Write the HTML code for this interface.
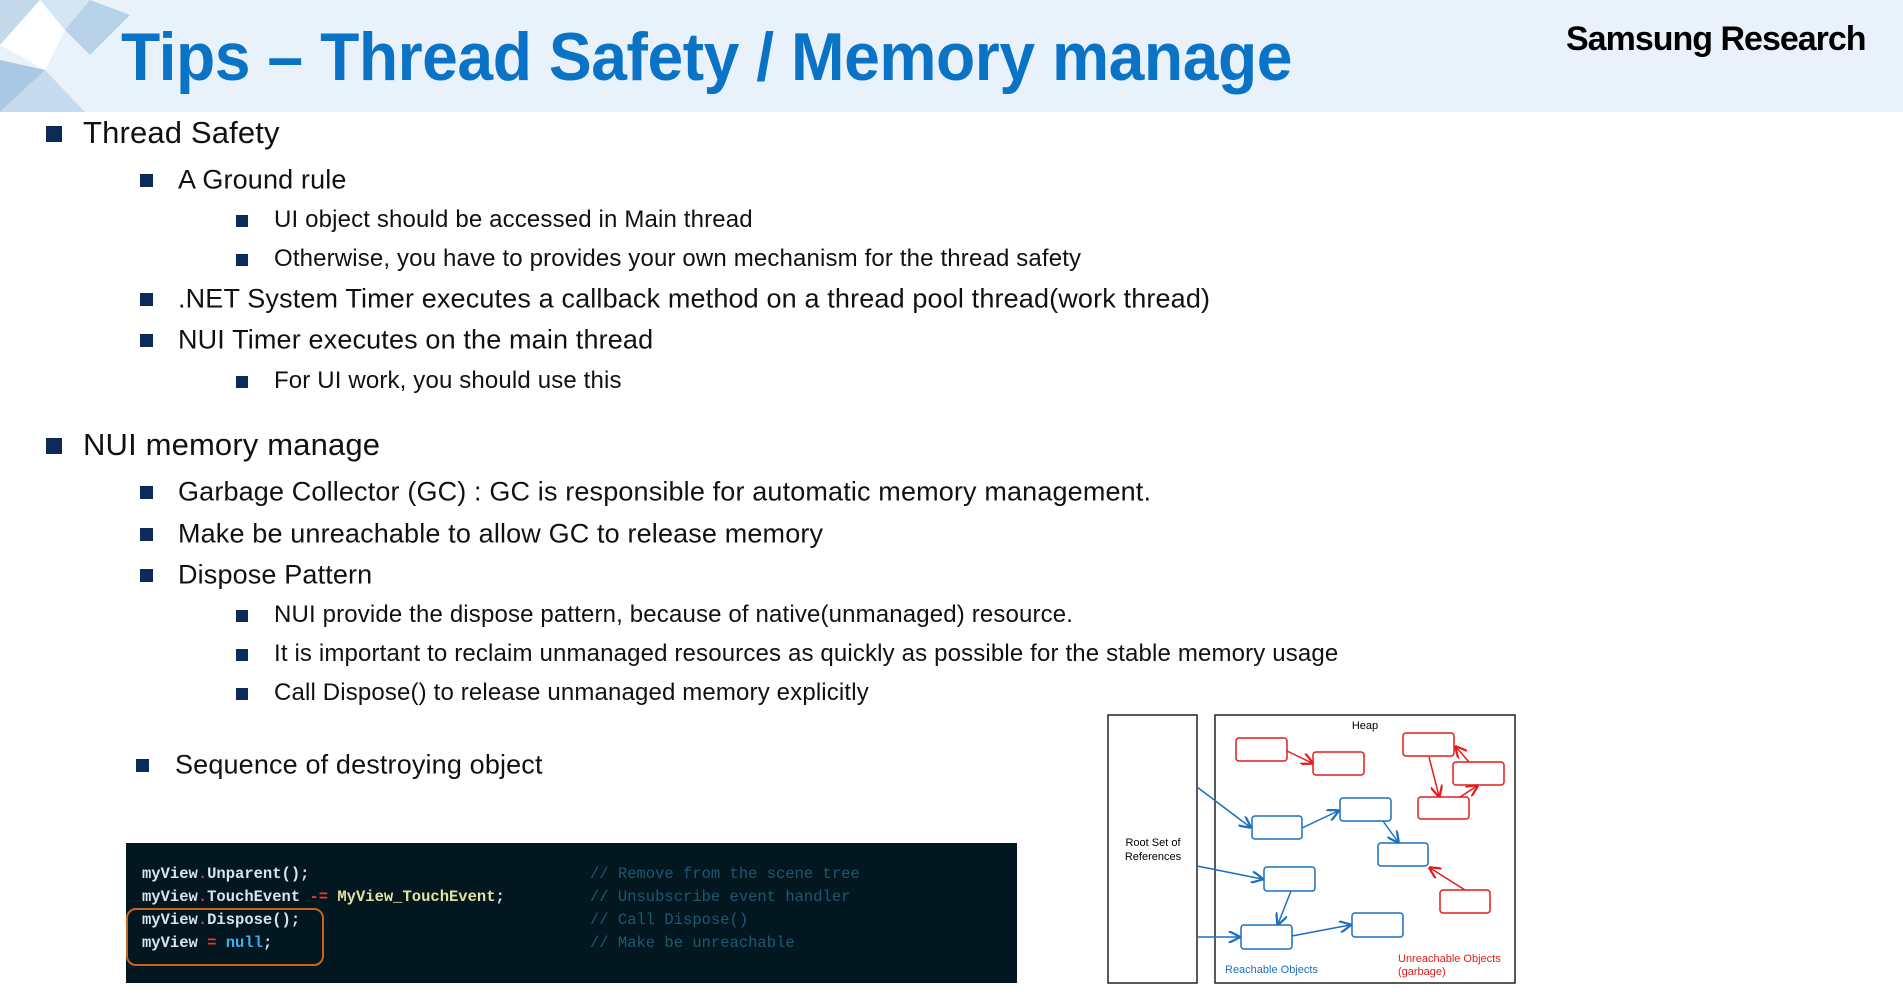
<!DOCTYPE html>
<html><head><meta charset="utf-8"><style>
body{margin:0;width:1903px;height:994px;position:relative;background:#fff;overflow:hidden;font-family:"Liberation Sans",sans-serif;color:#111}
.hdr{position:absolute;left:0;top:0;width:1903px;height:112px;background:#e9f2fb}
.title{position:absolute;left:121px;top:18px;font-size:68px;font-weight:bold;color:#0a73c6;white-space:nowrap;transform:scaleX(0.945);transform-origin:left top;letter-spacing:-0.5px}
.sr{position:absolute;left:1566px;top:20px;font-size:34px;font-weight:bold;color:#000;letter-spacing:-1px}
.t{position:absolute;white-space:nowrap;transform:translateY(-50%);letter-spacing:0.15px}
.b{position:absolute;background:#0b2c5a}
.code{position:absolute;left:126px;top:843px;width:891px;height:140px;background:#02171f;font-family:"Liberation Mono",monospace;font-size:15.5px;font-weight:bold}
.cl{position:absolute;white-space:nowrap;color:#d6e4ee}
.cm{color:#1d5a70;font-weight:normal}
</style></head><body>
<div class="hdr"></div>
<svg style="position:absolute;left:0;top:0" width="130" height="112">
<polygon points="0,0 40,0 0,45" fill="#c3d9ec"/>
<polygon points="40,0 90,0 65,30" fill="#d4e5f3"/>
<polygon points="90,0 130,15 90,55 65,30" fill="#b7d1e8"/>
<polygon points="0,45 40,0 65,30 45,70" fill="#fff"/>
<polygon points="0,60 45,70 0,112" fill="#aac8e3"/>
<polygon points="45,70 85,112 0,112" fill="#c6dbee"/>
</svg>
<div class="title">Tips – Thread Safety / Memory manage</div>
<div class="sr">Samsung Research</div>

<div class="b" style="left:46px;top:126px;width:16px;height:16px"></div>
<div class="t" style="left:83px;top:133px;font-size:31px">Thread Safety</div>
<div class="b" style="left:140px;top:174px;width:13px;height:13px"></div>
<div class="t" style="left:178px;top:180px;font-size:27px">A Ground rule</div>
<div class="b" style="left:236px;top:215px;width:12px;height:12px"></div>
<div class="t" style="left:274px;top:220px;font-size:24px">UI object should be accessed in Main thread</div>
<div class="b" style="left:236px;top:254px;width:12px;height:12px"></div>
<div class="t" style="left:274px;top:259px;font-size:24px">Otherwise, you have to provides your own mechanism for the thread safety</div>
<div class="b" style="left:140px;top:293px;width:13px;height:13px"></div>
<div class="t" style="left:178px;top:299px;font-size:27px">.NET System Timer executes a callback method on a thread pool thread(work thread)</div>
<div class="b" style="left:140px;top:334px;width:13px;height:13px"></div>
<div class="t" style="left:178px;top:340px;font-size:27px">NUI Timer executes on the main thread</div>
<div class="b" style="left:236px;top:376px;width:12px;height:12px"></div>
<div class="t" style="left:274px;top:381px;font-size:24px">For UI work, you should use this</div>

<div class="b" style="left:46px;top:438px;width:16px;height:16px"></div>
<div class="t" style="left:83px;top:445px;font-size:31px">NUI memory manage</div>
<div class="b" style="left:140px;top:486px;width:13px;height:13px"></div>
<div class="t" style="left:178px;top:492px;font-size:27px">Garbage Collector (GC) : GC is responsible for automatic memory management.</div>
<div class="b" style="left:140px;top:528px;width:13px;height:13px"></div>
<div class="t" style="left:178px;top:534px;font-size:27px">Make be unreachable to allow GC to release memory</div>
<div class="b" style="left:140px;top:569px;width:13px;height:13px"></div>
<div class="t" style="left:178px;top:575px;font-size:27px">Dispose Pattern</div>
<div class="b" style="left:236px;top:610px;width:12px;height:12px"></div>
<div class="t" style="left:274px;top:615px;font-size:24px">NUI provide the dispose pattern, because of native(unmanaged) resource.</div>
<div class="b" style="left:236px;top:649px;width:12px;height:12px"></div>
<div class="t" style="left:274px;top:654px;font-size:24px">It is important to reclaim unmanaged resources as quickly as possible for the stable memory usage</div>
<div class="b" style="left:236px;top:688px;width:12px;height:12px"></div>
<div class="t" style="left:274px;top:693px;font-size:24px">Call Dispose() to release unmanaged memory explicitly</div>
<div class="b" style="left:136px;top:759px;width:13px;height:13px"></div>
<div class="t" style="left:175px;top:765px;font-size:27px">Sequence of destroying object</div>

<div class="code">
<div class="cl" style="left:16px;top:22px">myView<span style="color:#e33">.</span>Unparent();</div>
<div class="cl" style="left:16px;top:45px">myView<span style="color:#e33">.</span>TouchEvent <span style="color:#e33">-=</span> <span style="color:#e6e0a0">MyView_TouchEvent</span>;</div>
<div class="cl" style="left:16px;top:68px">myView<span style="color:#e33">.</span>Dispose();</div>
<div class="cl" style="left:16px;top:91px">myView <span style="color:#e33">=</span> <span style="color:#3ab0f0">null</span>;</div>
<div class="cl cm" style="left:464px;top:22px">// Remove from the scene tree</div>
<div class="cl cm" style="left:464px;top:45px">// Unsubscribe event handler</div>
<div class="cl cm" style="left:464px;top:68px">// Call Dispose()</div>
<div class="cl cm" style="left:464px;top:91px">// Make be unreachable</div>
<div style="position:absolute;left:0;top:65px;width:194px;height:54px;border:2px solid #c8651c;border-radius:10px"></div>
</div>

<svg style="position:absolute;left:0;top:0" width="1903" height="994" font-family="Liberation Sans, sans-serif">
<defs>
<marker id="ab" markerWidth="8" markerHeight="8" refX="7" refY="4" orient="auto"><path d="M0,0 L8,4 L0,8" fill="none" stroke="#1a6fc0" stroke-width="1.5"/></marker>
<marker id="ar" markerWidth="8" markerHeight="8" refX="7" refY="4" orient="auto"><path d="M0,0 L8,4 L0,8" fill="none" stroke="#e51a1a" stroke-width="1.5"/></marker>
</defs>
<rect x="1108" y="715" width="89" height="268" fill="#fff" stroke="#222" stroke-width="1.5"/>
<rect x="1215" y="715" width="300" height="268" fill="#fff" stroke="#222" stroke-width="1.5"/>
<text x="1365" y="729" font-size="11" text-anchor="middle">Heap</text>
<text x="1153" y="846" font-size="11" text-anchor="middle">Root Set of</text>
<text x="1153" y="860" font-size="11" text-anchor="middle">References</text>
<text x="1225" y="973" font-size="11" fill="#1a6fc0">Reachable Objects</text>
<text x="1398" y="962" font-size="11" fill="#e51a1a">Unreachable Objects</text>
<text x="1398" y="975" font-size="11" fill="#e51a1a">(garbage)</text>
<g fill="#fff" stroke="#e51a1a" stroke-width="1.5">
<rect x="1236" y="738" width="51" height="23" rx="3"/>
<rect x="1313" y="752" width="51" height="23" rx="3"/>
<rect x="1403" y="733" width="51" height="23" rx="3"/>
<rect x="1453" y="762" width="51" height="23" rx="3"/>
<rect x="1418" y="797" width="51" height="22" rx="3"/>
<rect x="1440" y="890" width="50" height="23" rx="3"/>
</g>
<g fill="#fff" stroke="#1a6fc0" stroke-width="1.5">
<rect x="1252" y="816" width="50" height="23" rx="3"/>
<rect x="1340" y="798" width="51" height="23" rx="3"/>
<rect x="1378" y="843" width="50" height="23" rx="3"/>
<rect x="1264" y="867" width="51" height="24" rx="3"/>
<rect x="1241" y="925" width="51" height="24" rx="3"/>
<rect x="1352" y="913" width="51" height="24" rx="3"/>
</g>
<g stroke="#e51a1a" stroke-width="1.5" fill="none" marker-end="url(#ar)">
<line x1="1287" y1="751" x2="1312" y2="763"/>
<line x1="1429" y1="757" x2="1439" y2="796"/>
<line x1="1460" y1="797" x2="1477" y2="786"/>
<line x1="1469" y1="762" x2="1456" y2="747"/>
<line x1="1465" y1="890" x2="1430" y2="868"/>
</g>
<g stroke="#1a6fc0" stroke-width="1.5" fill="none" marker-end="url(#ab)">
<line x1="1197" y1="787" x2="1250" y2="827"/>
<line x1="1302" y1="828" x2="1338" y2="811"/>
<line x1="1383" y1="821" x2="1398" y2="842"/>
<line x1="1197" y1="866" x2="1262" y2="879"/>
<line x1="1291" y1="891" x2="1278" y2="924"/>
<line x1="1197" y1="937" x2="1239" y2="937"/>
<line x1="1292" y1="936" x2="1350" y2="925"/>
</g>
</svg>
</body></html>
